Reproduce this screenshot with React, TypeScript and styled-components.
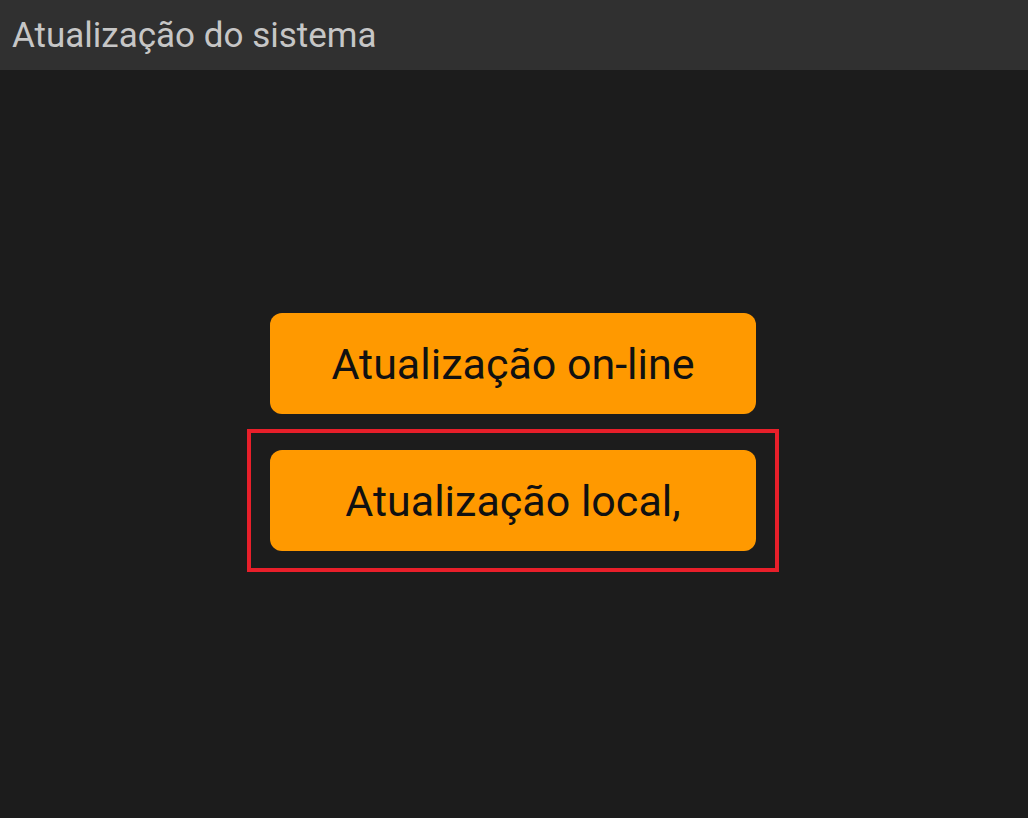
import * as React from 'react';
import styled, { createGlobalStyle } from 'styled-components';

const GlobalStyle = createGlobalStyle`
    html, body {
        margin: 0;
        padding: 0;
        background: #1c1c1c;
    }
    body {
        font-family: Roboto, "Liberation Sans", sans-serif;
    }
`;

const Screen = styled.div`
    width: 1028px;
    height: 818px;
    display: flex;
    flex-direction: column;
    background: #1c1c1c;
    overflow: hidden;
`;

const TitleBar = styled.div`
    height: 70px;
    flex-shrink: 0;
    display: flex;
    align-items: center;
    padding-left: 12px;
    background: #303030;
    color: #c6c6c6;
    font-size: 35px;
    box-sizing: border-box;
`;

const Content = styled.div`
    display: flex;
    flex-direction: column;
    align-items: center;
    padding-top: 243px;
    padding-right: 2px;
`;

interface FocusProps {
    readonly focused?: boolean;
}

const FocusFrame = styled.div<FocusProps>`
    padding: ${(p) => (p.focused ? '17px 19px' : '0')};
    border: ${(p) => (p.focused ? '4px solid #e81f2a' : 'none')};
    margin-top: ${(p) => (p.focused ? '15px' : '0')};
`;

const MenuButton = styled.div`
    width: 486px;
    height: 101px;
    border-radius: 12px;
    background: #ff9900;
    color: #111;
    font-size: 43px;
    display: flex;
    align-items: center;
    justify-content: center;
    box-sizing: border-box;
`;

export default function App() {
    return (
        <Screen>
            <GlobalStyle />
            <TitleBar>Atualização do sistema</TitleBar>
            <Content>
                <FocusFrame>
                    <MenuButton>Atualização on-line</MenuButton>
                </FocusFrame>
                <FocusFrame focused={true}>
                    <MenuButton>Atualização local,</MenuButton>
                </FocusFrame>
            </Content>
        </Screen>
    );
}
